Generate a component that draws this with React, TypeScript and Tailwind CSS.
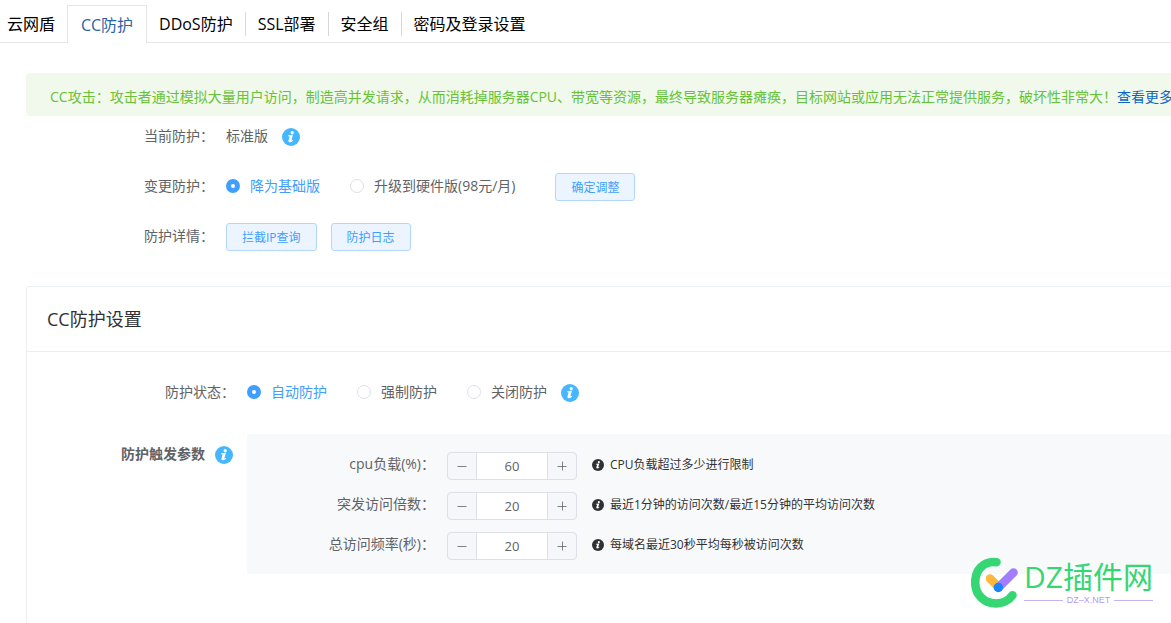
import React, { useState } from 'react';

const tabs = ['云网盾', 'CC防护', 'DDoS防护', 'SSL部署', '安全组', '密码及登录设置'];

const params = [
    { id: 'cpu', label: 'cpu负载(%)：', value: 60, hint: 'CPU负载超过多少进行限制' },
    { id: 'burst', label: '突发访问倍数：', value: 20, hint: '最近1分钟的访问次数/最近15分钟的平均访问次数' },
    { id: 'rate', label: '总访问频率(秒)：', value: 20, hint: '每域名最近30秒平均每秒被访问次数' },
];

const InfoIcon: React.FC<{ className: string }> = ({ className }) => (
    <svg viewBox="0 0 18 18" className={className} aria-hidden="true">
        <circle cx="9" cy="9" r="9" fill="currentColor" />
        <circle cx="10.2" cy="4.7" r="1.6" fill="#fff" />
        <path
            d="M6.3 7.3 L11 6.8 L9.4 12 Q9.3 12.6 9.8 12.4 L10.7 11.8 L11.1 12.4 Q9.4 14.4 7.5 14.3 Q6 14 6.5 12.4 L7.6 8.5 L6.2 8.2 Z"
            fill="#fff"
        />
    </svg>
);

const HelpButton: React.FC<{ label: string }> = ({ label }) => (
    <button type="button" aria-label={label} className="mt-0.5 shrink-0 text-[#46b6ff]">
        <InfoIcon className="block size-[18px]" />
    </button>
);

interface RadioProps {
    name: string;
    label: string;
    checked: boolean;
    onChange: () => void;
}

const Radio: React.FC<RadioProps> = ({ name, label, checked, onChange }) => (
    <label className={`flex items-center gap-2.5 cursor-pointer ${checked ? 'text-[#409eff]' : 'text-[#606266]'}`}>
        <input
            type="radio"
            name={name}
            checked={checked}
            onChange={onChange}
            className="size-3.5 appearance-none rounded-full border border-[#dcdfe6] bg-white checked:border-[5px] checked:border-[#409eff]"
        />
        {label}
    </label>
);

const PlainButton: React.FC<{ children: React.ReactNode }> = ({ children }) => (
    <button
        type="button"
        className="mt-0.5 h-7 rounded-[3px] border border-[#b3d8ff] bg-[#ecf5ff] px-[15px] pt-0.5 text-xs text-[#409eff]"
    >
        {children}
    </button>
);

const FormRow: React.FC<{ label: string; children: React.ReactNode }> = ({ label, children }) => (
    <div className="flex min-h-10 items-center">
        <span className="w-[200px] shrink-0 pr-3 text-right">{label}</span>
        {children}
    </div>
);

const NumberField: React.FC<{ id: string; initial: number }> = ({ id, initial }) => {
    const [value, setValue] = useState(initial);

    return (
        <div className="flex h-7 w-[130px] shrink-0 overflow-hidden rounded border border-[#dcdfe6] bg-[#f5f7fa] text-[#606266]">
            <button type="button" aria-label="减少" onClick={() => setValue(value - 1)} className="flex w-7 items-center justify-center">
                <svg viewBox="0 0 10 10" className="size-2.5" stroke="currentColor" strokeWidth="0.8" aria-hidden="true">
                    <path d="M0.5 5.5H9.5" />
                </svg>
            </button>
            <input
                id={id}
                type="text"
                inputMode="numeric"
                value={value}
                onChange={(e) => setValue(Number(e.target.value) || 0)}
                className="min-w-0 flex-1 border-x border-[#dcdfe6] bg-white text-center text-[13px] outline-none"
            />
            <button type="button" aria-label="增加" onClick={() => setValue(value + 1)} className="flex w-7 items-center justify-center">
                <svg viewBox="0 0 10 10" className="size-2.5" stroke="currentColor" strokeWidth="0.8" aria-hidden="true">
                    <path d="M0.5 5.5H9.5M5.5 0.5V9.5" />
                </svg>
            </button>
        </div>
    );
};

const SiteMark: React.FC = () => (
    <div className="pointer-events-none absolute right-[18px] bottom-3.5 flex items-center gap-[5px]">
        <svg viewBox="0 0 48 52" className="h-[52px] w-12" fill="none" strokeLinecap="round" aria-hidden="true">
            <path d="M25.5 5.2C12 3.5 4.2 13.5 4.2 25.5C4.2 38 13.5 46.5 25 46.5C33 46.5 38 43 41.5 38.3" stroke="#35d673" strokeWidth="8.6" />
            <path d="M19 21.5L27.5 30" stroke="#ffb73d" strokeWidth="8.6" />
            <path d="M42.5 15.5L27.5 30.5" stroke="#a27dff" strokeWidth="8.6" />
            <circle cx="27.3" cy="30.5" r="4.7" fill="#1686ff" />
        </svg>
        <div className="pb-0.5">
            <div className="font-['Open_Sans','Noto_Sans_CJK_SC',sans-serif] text-[30px] leading-9 text-[#35d673]">
                DZ插件网
            </div>
            <div className="flex items-center gap-1 font-['Liberation_Sans',sans-serif] text-[9px] leading-[10px] text-[#b49af5]">
                <span className="h-px flex-1 bg-[#c5b2f7]" />
                DZ–X.NET
                <span className="h-px flex-1 bg-[#c5b2f7]" />
            </div>
        </div>
    </div>
);

export default function App() {
    const [activeTab, setActiveTab] = useState('CC防护');
    const [plan, setPlan] = useState('basic');
    const [mode, setMode] = useState('auto');

    return (
        <div
            lang="zh-CN"
            className="relative flex min-h-screen flex-col overflow-hidden bg-white font-['Open_Sans','Noto_Sans_CJK_SC',sans-serif] text-sm text-[#606266]"
        >
            <nav className="flex h-[43px] shrink-0 items-end border-b border-[#e6e6e6] text-base whitespace-nowrap text-black">
                {tabs.map((tab, i) => {
                    const active = tab === activeTab;
                    const divided = i > 1 && i < tabs.length - 1;
                    return (
                        <button
                            key={tab}
                            type="button"
                            onClick={() => setActiveTab(tab)}
                            className={
                                active
                                    ? '-mb-px h-[38px] min-w-20 border border-b-0 border-[#e6e6e6] bg-white px-3 text-[#2a64a5]'
                                    : `mb-1.5 h-6 ${i === 0 ? 'pr-3 pl-[7px]' : 'px-3'} ${divided ? 'border-r border-[#d8d8d8]' : ''}`
                            }
                        >
                            {tab}
                        </button>
                    );
                })}
            </nav>

            <main className="flex flex-1 flex-col pt-[30px] pl-[26px]">
                <div className="overflow-hidden rounded-l bg-[#f0f9eb] pt-[13px] pb-[9px] pl-6 leading-[21px] whitespace-nowrap text-[#67c23a]">
                    CC攻击：攻击者通过模拟大量用户访问，制造高并发请求，从而消耗掉服务器CPU、带宽等资源，最终导致服务器瘫痪，目标网站或应用无法正常提供服务，破坏性非常大！
                    <a href="#more" className="text-[#0b66c3]">查看更多</a>
                </div>

                <form className="flex flex-col gap-2.5">
                    <FormRow label="当前防护：">
                        <span className="mr-3.5">标准版</span>
                        <HelpButton label="当前防护说明" />
                    </FormRow>
                    <FormRow label="变更防护：">
                        <div className="mr-10 flex gap-[30px]">
                            <Radio name="plan" label="降为基础版" checked={plan === 'basic'} onChange={() => setPlan('basic')} />
                            <Radio name="plan" label="升级到硬件版(98元/月)" checked={plan === 'hardware'} onChange={() => setPlan('hardware')} />
                        </div>
                        <PlainButton>确定调整</PlainButton>
                    </FormRow>
                    <FormRow label="防护详情：">
                        <div className="flex gap-3.5">
                            <PlainButton>拦截IP查询</PlainButton>
                            <PlainButton>防护日志</PlainButton>
                        </div>
                    </FormRow>
                </form>

                <section className="mt-[30px] flex-1 rounded-tl border-t border-l border-[#ebeef5] pb-8">
                    <h2 className="flex h-[65px] items-center border-b border-[#ebeef5] px-5 text-lg text-[#303133]">
                        CC防护设置
                    </h2>
                    <form className="pt-5 pl-5">
                        <FormRow label="防护状态：">
                            <div className="mr-3.5 flex gap-[30px]">
                                <Radio name="mode" label="自动防护" checked={mode === 'auto'} onChange={() => setMode('auto')} />
                                <Radio name="mode" label="强制防护" checked={mode === 'force'} onChange={() => setMode('force')} />
                                <Radio name="mode" label="关闭防护" checked={mode === 'off'} onChange={() => setMode('off')} />
                            </div>
                            <HelpButton label="防护状态说明" />
                        </FormRow>

                        <div className="mt-[22px] flex">
                            <div className="flex h-10 w-[200px] shrink-0 items-center justify-end gap-2.5 pr-3.5 font-bold">
                                防护触发参数
                                <HelpButton label="防护触发参数说明" />
                            </div>
                            <div className="flex-1 bg-[#f8f9fb] pt-3 pb-2">
                                {params.map((p) => (
                                    <div key={p.id} className="flex h-10 items-center">
                                        <label htmlFor={p.id} className="w-[200px] shrink-0 pr-3 pb-1 text-right">
                                            {p.label}
                                        </label>
                                        <NumberField id={p.id} initial={p.value} />
                                        <span className="ml-[15px] flex items-center gap-1.5 pb-0.5 text-xs text-[#303133]">
                                            <InfoIcon className="size-3" />
                                            {p.hint}
                                        </span>
                                    </div>
                                ))}
                            </div>
                        </div>
                    </form>
                </section>
            </main>

            <SiteMark />
        </div>
    );
}
